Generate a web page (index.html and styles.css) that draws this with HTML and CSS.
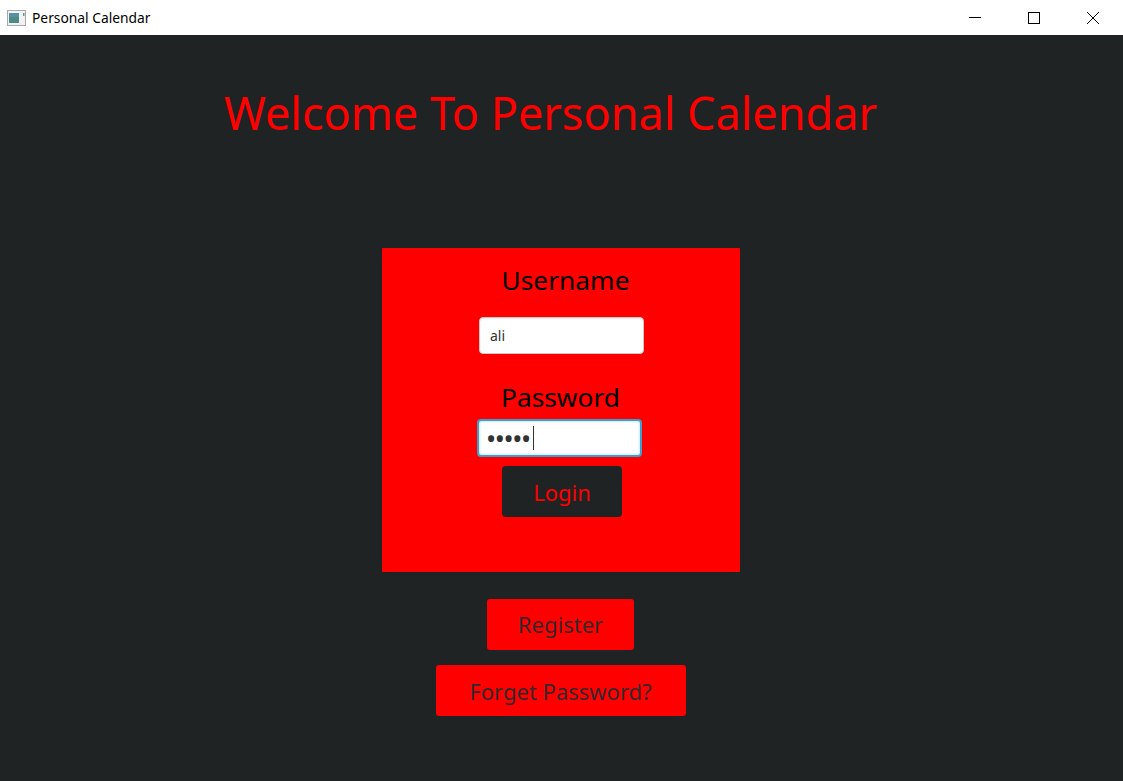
FILE: index.html
```html
<!DOCTYPE html>
<html lang="en">
<head>
    <meta charset="UTF-8">
    <title>Personal Calendar</title>
    <link rel="stylesheet" href="styles.css">
</head>
<body>
    <header class="titlebar">
        <div class="app-name">
            <svg class="app-icon" viewBox="0 0 19 16">
                <rect x="0.5" y="0.5" width="18" height="15" fill="#f2f2f2" stroke="#a9a9a9"/>
                <rect x="2" y="3" width="10" height="10" fill="#4c8b85"/>
                <rect x="2" y="3" width="10" height="4" fill="#5b8fa8"/>
                <rect x="16" y="3" width="1.5" height="3" fill="#6f8f96"/>
            </svg>
            <span>Personal Calendar</span>
        </div>
        <div class="window-buttons">
            <svg viewBox="0 0 12 12"><path d="M0 5.5h12" stroke="#000" fill="none"/></svg>
            <svg viewBox="0 0 12 12"><rect x="0.5" y="0.5" width="11" height="11" stroke="#000" fill="none"/></svg>
            <svg viewBox="0 0 12 12"><path d="M0 0l12 12M12 0L0 12" stroke="#000" fill="none"/></svg>
        </div>
    </header>

    <main class="content">
        <h1>Welcome To Personal Calendar</h1>

        <form class="login-box">
            <label class="username-label" for="username">Username</label>
            <input class="username-input" type="text" id="username" value="ali">
            <label class="password-label" for="password">Password</label>
            <div class="password-input" id="password"><span class="dots">•••••</span><span class="caret"></span></div>
            <button class="login-btn" type="button">Login</button>
        </form>

        <button class="red-btn register-btn" type="button">Register</button>
        <button class="red-btn forget-btn" type="button">Forget Password?</button>
    </main>
</body>
</html>
```

FILE: styles.css
```css
* {
    margin: 0;
    padding: 0;
    box-sizing: border-box;
}

body {
    font-family: 'Noto Sans', 'Open Sans', sans-serif;
    width: 1123px;
    height: 781px;
    overflow: hidden;
    background: #1f2324;
    display: flex;
    flex-direction: column;
}

.titlebar {
    height: 35px;
    background: #fff;
    display: flex;
    justify-content: space-between;
    align-items: center;
    flex-shrink: 0;
}

.app-name {
    display: flex;
    align-items: center;
    gap: 6px;
    padding-left: 7px;
    font-size: 13.8px;
    color: #000;
}

.app-icon {
    width: 19px;
    height: 16px;
}

.window-buttons {
    display: flex;
    gap: 47px;
    padding-right: 24px;
}

.window-buttons svg {
    width: 12px;
    height: 12px;
}

.content {
    flex: 1;
    display: flex;
    flex-direction: column;
    align-items: center;
    padding-right: 2px;
}

h1 {
    color: #f00;
    font-size: 45px;
    font-weight: 400;
    line-height: 62px;
    margin-top: 47px;
    margin-bottom: 104px;
    margin-right: 20px;
}

.login-box {
    width: 358px;
    height: 324px;
    background: #f00;
    border-radius: 1px;
    display: flex;
    flex-direction: column;
    align-items: center;
    padding-top: 13px;
}

.username-label,
.password-label {
    font-size: 26.3px;
    line-height: 38px;
    color: #000;
}

.username-label {
    margin-left: 10px;
}

.username-input {
    width: 165px;
    height: 37px;
    margin-top: 18px;
    margin-left: 2px;
    border: 1px solid #c9c9c9;
    border-radius: 4px;
    background: #fff;
    box-shadow: inset 0 1px 2px rgba(0, 0, 0, 0.08);
    padding: 0 10px;
    font-family: inherit;
    font-size: 14px;
    color: #333;
    outline: none;
}

.password-label {
    margin-top: 24px;
}

.password-input {
    width: 165px;
    height: 38px;
    margin-top: 3px;
    margin-left: -2px;
    border: 2px solid #3c9fd0;
    border-radius: 4px;
    background: #fff;
    box-shadow: inset 0 0 3px rgba(60, 159, 208, 0.5);
    padding-left: 7px;
    display: flex;
    align-items: center;
    color: #333;
}

.dots {
    font-size: 27px;
    line-height: 1;
    letter-spacing: -1.4px;
}

.caret {
    width: 1px;
    height: 24px;
    margin-left: 3px;
    background: #333;
}

.login-btn {
    width: 120px;
    height: 51px;
    margin-top: 9px;
    margin-left: 3px;
    background: #1f2324;
    color: #f00;
    border: none;
    border-radius: 4px;
    font-family: inherit;
    font-size: 22px;
}

.red-btn {
    height: 51px;
    background: #f00;
    color: #36282a;
    border: none;
    border-radius: 3px;
    font-family: inherit;
    font-size: 22px;
}

.register-btn {
    width: 147px;
    margin-top: 27px;
    padding-bottom: 2px;
}

.forget-btn {
    width: 250px;
    margin-top: 15px;
}
```
